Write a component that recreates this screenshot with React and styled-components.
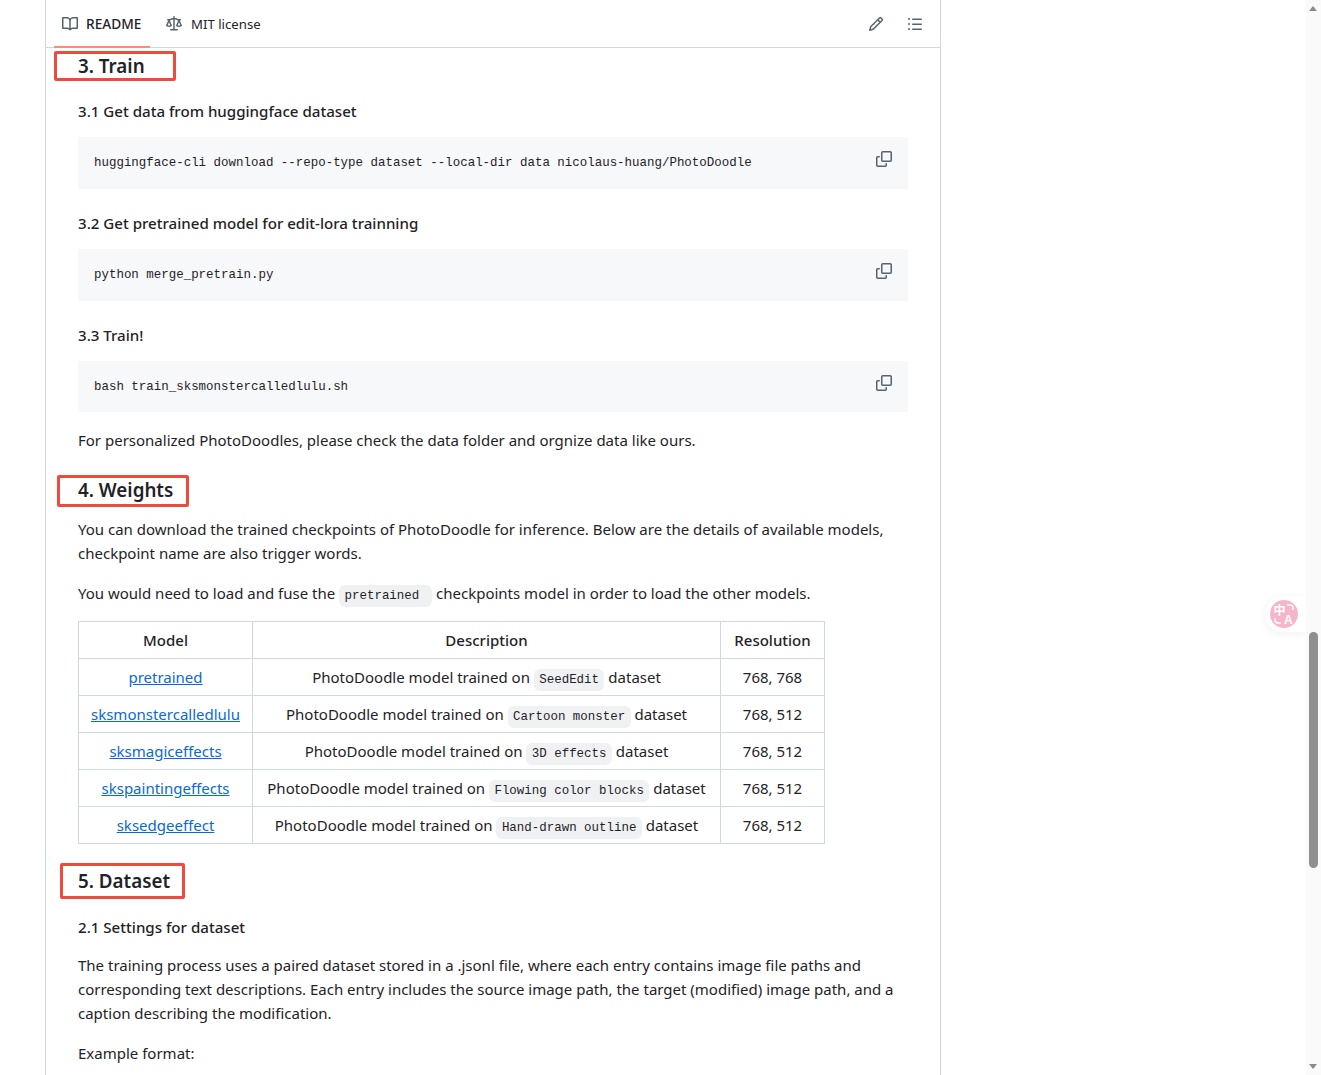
import React from "react";
import styled, { createGlobalStyle } from "styled-components";

const GlobalStyle = createGlobalStyle`
  html, body {
    margin: 0;
    padding: 0;
    height: 1075px;
    overflow: hidden;
    background: #fff;
  }
  body {
    font-family: "Noto Sans", "Open Sans", sans-serif;
    font-size: 15px;
    line-height: 24px;
    color: #1f2328;
  }
`;

const rows = [
  ["pretrained", "SeedEdit", "768, 768"],
  ["sksmonstercalledlulu", "Cartoon monster", "768, 512"],
  ["sksmagiceffects", "3D effects", "768, 512"],
  ["skspaintingeffects", "Flowing color blocks", "768, 512"],
  ["sksedgeeffect", "Hand-drawn outline", "768, 512"],
];

const icons = {
  book: "M0 1.75A.75.75 0 0 1 .75 1h4.253c1.227 0 2.317.59 3 1.501A3.743 3.743 0 0 1 11.006 1h4.245a.75.75 0 0 1 .75.75v10.5a.75.75 0 0 1-.75.75h-4.507a2.25 2.25 0 0 0-1.591.659l-.622.621a.75.75 0 0 1-1.06 0l-.622-.621A2.25 2.25 0 0 0 5.258 13H.75a.75.75 0 0 1-.75-.75Zm7.251 10.324.004-5.073-.002-2.253A2.25 2.25 0 0 0 5.003 2.5H1.5v9h3.757a3.75 3.75 0 0 1 1.994.574ZM8.755 4.75l-.004 7.322a3.752 3.752 0 0 1 1.992-.572H14.5v-9h-3.495a2.25 2.25 0 0 0-2.25 2.25Z",
  law: "M8.75.75V2h.985c.304 0 .603.08.867.231l1.29.736c.038.022.08.033.124.033h2.234a.75.75 0 0 1 0 1.5h-.427l2.111 4.692a.75.75 0 0 1-.154.838l-.53-.53.529.531-.001.002-.002.002-.006.006-.006.005-.01.01-.045.04c-.21.176-.441.327-.686.45C14.556 10.78 13.88 11 13 11a4.498 4.498 0 0 1-2.023-.454 3.544 3.544 0 0 1-.686-.45l-.045-.04-.016-.015-.006-.006-.004-.004v-.001a.75.75 0 0 1-.154-.838L12.178 4.5h-.162c-.305 0-.604-.079-.868-.231l-1.29-.736a.245.245 0 0 0-.124-.033H8.75V13h2.5a.75.75 0 0 1 0 1.5h-6.5a.75.75 0 0 1 0-1.5h2.5V3.5h-.984a.245.245 0 0 0-.124.033l-1.289.737c-.265.15-.564.23-.869.23h-.162l2.112 4.692a.75.75 0 0 1-.154.838l-.53-.53.529.531-.001.002-.002.002-.006.006-.016.015-.045.04c-.21.176-.441.327-.686.45C4.556 10.78 3.88 11 3 11a4.498 4.498 0 0 1-2.023-.454 3.544 3.544 0 0 1-.686-.45l-.045-.04-.016-.015-.006-.006-.004-.004v-.001a.75.75 0 0 1-.154-.838L2.178 4.5H1.75a.75.75 0 0 1 0-1.5h2.234a.249.249 0 0 0 .125-.033l1.288-.737c.265-.15.564-.23.869-.23h.984V.75a.75.75 0 0 1 1.5 0Zm2.945 8.477c.285.135.718.273 1.305.273s1.02-.138 1.305-.273L13 6.327Zm-10 0c.285.135.718.273 1.305.273s1.02-.138 1.305-.273L3 6.327Z",
  pencil: "M11.013 1.427a1.75 1.75 0 0 1 2.474 0l1.086 1.086a1.75 1.75 0 0 1 0 2.474l-8.61 8.61c-.21.21-.47.364-.756.445l-3.251.93a.75.75 0 0 1-.927-.928l.929-3.25c.081-.286.235-.547.445-.758l8.61-8.61Zm.176 4.823L9.75 4.81l-6.286 6.287a.253.253 0 0 0-.064.108l-.558 1.953 1.953-.558a.253.253 0 0 0 .108-.064Zm1.238-3.763a.25.25 0 0 0-.354 0L10.811 3.75l1.439 1.44 1.263-1.263a.25.25 0 0 0 0-.354Z",
  list: "M5.75 2.5h8.5a.75.75 0 0 1 0 1.5h-8.5a.75.75 0 0 1 0-1.5Zm0 5h8.5a.75.75 0 0 1 0 1.5h-8.5a.75.75 0 0 1 0-1.5Zm0 5h8.5a.75.75 0 0 1 0 1.5h-8.5a.75.75 0 0 1 0-1.5ZM2 14a1 1 0 1 1 0-2 1 1 0 0 1 0 2Zm1-6a1 1 0 1 1-2 0 1 1 0 0 1 2 0ZM2 4a1 1 0 1 1 0-2 1 1 0 0 1 0 2Z",
  copy1: "M0 6.75C0 5.784.784 5 1.75 5h1.5a.75.75 0 0 1 0 1.5h-1.5a.25.25 0 0 0-.25.25v7.5c0 .138.112.25.25.25h7.5a.25.25 0 0 0 .25-.25v-1.5a.75.75 0 0 1 1.5 0v1.5A1.75 1.75 0 0 1 9.25 16h-7.5A1.75 1.75 0 0 1 0 14.25Z",
  copy2: "M5 1.75C5 .784 5.784 0 6.75 0h7.5C15.216 0 16 .784 16 1.75v7.5A1.75 1.75 0 0 1 14.25 11h-7.5A1.75 1.75 0 0 1 5 9.25Zm1.75-.25a.25.25 0 0 0-.25.25v7.5c0 .138.112.25.25.25h7.5a.25.25 0 0 0 .25-.25v-7.5a.25.25 0 0 0-.25-.25Z",
};

function Octicon({ name }) {
  return (
    <svg width="16" height="16" viewBox="0 0 16 16" fill="currentColor">
      <path d={icons[name]} />
      {name === "copy1" && <path d={icons.copy2} />}
    </svg>
  );
}

function CodeBlock({ children, height }) {
  return (
    <Pre $height={height}>
      <code>{children}</code>
      <CopyButton>
        <Octicon name="copy1" />
      </CopyButton>
    </Pre>
  );
}

export default function App() {
  return (
    <Page>
      <GlobalStyle />
      <Panel>
        <Header>
          <Tabs>
            <Tab $active>
              <Octicon name="book" />
              README
            </Tab>
            <Tab>
              <Octicon name="law" />
              MIT license
            </Tab>
          </Tabs>
          <Actions>
            <Octicon name="pencil" />
            <Octicon name="list" />
          </Actions>
        </Header>

        <Article>
          <SectionTitle $top={3}>
            <Marker $left={-24} $width={122} $height={30} />
            3. Train
          </SectionTitle>
          <SubTitle $top={18}>3.1 Get data from huggingface dataset</SubTitle>
          <CodeBlock>huggingface-cli download --repo-type dataset --local-dir data nicolaus-huang/PhotoDoodle</CodeBlock>
          <SubTitle $top={22}>3.2 Get pretrained model for edit-lora trainning</SubTitle>
          <CodeBlock>python merge_pretrain.py</CodeBlock>
          <SubTitle $top={22}>3.3 Train!</SubTitle>
          <CodeBlock height={51}>bash train_sksmonstercalledlulu.sh</CodeBlock>
          <Para $top={16}>
            For personalized PhotoDoodles, please check the data folder and orgnize data like ours.
          </Para>

          <SectionTitle $top={23}>
            <Marker $left={-21} $width={132} $height={32} $shift={1} />
            4. Weights
          </SectionTitle>
          <Para $top={12}>
            You can download the trained checkpoints of PhotoDoodle for inference. Below are the details of available models, checkpoint name are also trigger words.
          </Para>
          <Para $top={16}>
            You would need to load and fuse the <Tick>pretrained&nbsp;</Tick> checkpoints model in order to load the other models.
          </Para>

          <Table>
            <thead>
              <tr>
                <th>Model</th>
                <th>Description</th>
                <th>Resolution</th>
              </tr>
            </thead>
            <tbody>
              {rows.map(([name, data, res]) => (
                <tr key={name}>
                  <td>
                    <Link href="#">{name}</Link>
                  </td>
                  <td>
                    PhotoDoodle model trained on <Tick>{data}</Tick> dataset
                  </td>
                  <td>{res}</td>
                </tr>
              ))}
            </tbody>
          </Table>

          <SectionTitle $top={22}>
            <Marker $left={-18} $width={125} $height={36} />
            5. Dataset
          </SectionTitle>
          <SubTitle $top={19}>2.1 Settings for dataset</SubTitle>
          <Para $top={14}>
            The training process uses a paired dataset stored in a .jsonl file, where each entry contains image file paths and corresponding text descriptions. Each entry includes the source image path, the target (modified) image path, and a caption describing the modification.
          </Para>
          <Para $top={16}>Example format:</Para>
        </Article>
      </Panel>

      <TranslateTab>
        <TranslateBadge>
          <svg width="28" height="28" viewBox="0 0 28 28">
            <text x="3.5" y="15" fontSize="12" fontWeight="700" fill="#fff" fontFamily="Noto Sans CJK SC, sans-serif">中</text>
            <text x="14" y="24" fontSize="12" fontWeight="700" fill="#fff" fontFamily="Liberation Sans, sans-serif">A</text>
            <path d="M17 5h3a3 3 0 0 1 3 3v2M11 23H8a3 3 0 0 1-3-3v-2" fill="none" stroke="#fff" strokeWidth="1.5" />
          </svg>
        </TranslateBadge>
      </TranslateTab>

      <Scrollbar>
        <ArrowUp />
        <Thumb />
        <ArrowDown />
      </Scrollbar>
    </Page>
  );
}

const Page = styled.div`
  position: relative;
  height: 1075px;
  overflow: hidden;
  padding-left: 45px;
`;

const Panel = styled.main`
  width: 894px;
  height: 1075px;
  border-left: 1px solid #d1d9e0;
  border-right: 1px solid #d1d9e0;
`;

const Header = styled.header`
  display: flex;
  align-items: center;
  justify-content: space-between;
  height: 47px;
  padding: 0 17px 0 8px;
  border-bottom: 1px solid #d1d9e0;
`;

const Tabs = styled.nav`
  display: flex;
  height: 100%;
`;

const Tab = styled.div`
  display: flex;
  align-items: center;
  gap: ${(p) => (p.$active ? 8 : 9)}px;
  box-sizing: border-box;
  width: ${(p) => (p.$active ? "96px" : "auto")};
  height: 48px;
  padding: 2px 8px 0;
  margin-right: 8px;
  font-size: ${(p) => (p.$active ? 13.7 : 13.2)}px;
  font-weight: ${(p) => (p.$active ? 500 : 400)};
  color: #1f2328;
  border-bottom: 2px solid ${(p) => (p.$active ? "#fd8c73" : "transparent")};
  svg {
    color: #59636e;
    flex: none;
  }
`;

const Actions = styled.div`
  display: flex;
  align-items: center;
  gap: 23px;
  color: #59636e;
  padding-top: 1px;
`;

const Article = styled.article`
  padding: 0 32px;
`;

const SectionTitle = styled.h3`
  position: relative;
  margin: ${(p) => p.$top}px 0 0;
  font-size: 18.8px;
  line-height: 30px;
  font-weight: 600;
  color: #1f2328;
`;

const Marker = styled.span`
  position: absolute;
  left: ${(p) => p.$left}px;
  top: calc(50% + ${(p) => p.$shift || 0}px);
  width: ${(p) => p.$width}px;
  height: ${(p) => p.$height}px;
  transform: translateY(-50%);
  box-sizing: border-box;
  border: 3px solid #f04a3e;
  border-radius: 2px;
`;

const SubTitle = styled.h4`
  margin: ${(p) => p.$top}px 0 0;
  font-size: 15.1px;
  line-height: 24px;
  font-weight: 500;
`;

const Pre = styled.div`
  position: relative;
  box-sizing: border-box;
  height: ${(p) => p.$height || 52}px;
  margin-top: 14px;
  padding: 14px 16px;
  background: #f6f8fa;
  font-family: "Liberation Mono", monospace;
  font-size: 12.46px;
  line-height: 24px;
  white-space: pre;
  code {
    font: inherit;
  }
`;

const CopyButton = styled.span`
  position: absolute;
  top: 14px;
  right: 16px;
  line-height: 0;
  color: #59636e;
`;

const Para = styled.p`
  margin: ${(p) => p.$top}px 0 0;
`;

const Tick = styled.code`
  padding: 4px 5.4px;
  border-radius: 6px;
  background: #eff1f3;
  font-family: "Liberation Mono", monospace;
  font-size: 12.46px;
  line-height: 1;
`;

const Table = styled.table`
  margin-top: 16px;
  border-collapse: collapse;
  table-layout: fixed;
  width: 747px;
  th,
  td {
    height: 37px;
    box-sizing: border-box;
    padding: 0;
    border: 1px solid #d1d9e0;
    text-align: center;
    white-space: nowrap;
  }
  th {
    font-weight: 500;
  }
  th:nth-child(1) {
    width: 174px;
  }
  th:nth-child(2) {
    width: 468px;
  }
`;

const Link = styled.a`
  color: #0969da;
  text-decoration: underline;
`;

const TranslateTab = styled.div`
  position: absolute;
  left: 1265px;
  top: 596px;
  width: 41px;
  height: 36px;
  display: flex;
  align-items: center;
  padding-left: 5px;
  box-sizing: border-box;
  background: #fff;
  border-radius: 18px 0 0 18px;
  box-shadow: 0 2px 10px rgba(0, 0, 0, 0.06);
`;

const TranslateBadge = styled.div`
  width: 28px;
  height: 28px;
  flex: none;
  border-radius: 50%;
  background: #f6b6ca;
  line-height: 0;
`;

const Scrollbar = styled.div`
  position: absolute;
  top: 0;
  right: 0;
  width: 15px;
  height: 1075px;
  background: #fafafa;
`;

const ArrowUp = styled.span`
  position: absolute;
  top: 6px;
  left: 3px;
  border-left: 4.5px solid transparent;
  border-right: 4.5px solid transparent;
  border-bottom: 5px solid #8a8a8a;
`;

const ArrowDown = styled.span`
  position: absolute;
  bottom: 6px;
  left: 3px;
  border-left: 4.5px solid transparent;
  border-right: 4.5px solid transparent;
  border-top: 5px solid #8a8a8a;
`;

const Thumb = styled.span`
  position: absolute;
  top: 632px;
  left: 3px;
  width: 9px;
  height: 236px;
  border-radius: 5px;
  background: #8f8f8f;
`;
